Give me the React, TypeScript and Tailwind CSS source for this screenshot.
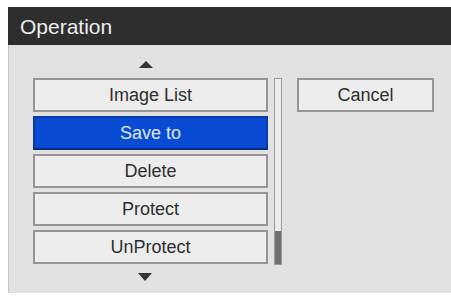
import React from "react";

const items = ["Image List", "Save to", "Delete", "Protect", "UnProtect"];
const selected = "Save to";

export default function App() {
  return (
    <div
      className="w-[451px] h-[296px] bg-white pt-[7px] pl-[8px] overflow-hidden"
      style={{ fontFamily: '"Liberation Sans", Arial, sans-serif' }}
    >
      <div className="flex flex-col h-[286px]">
        {/* Title bar */}
        <div className="h-[38px] bg-[#2e2e2e] flex items-center pl-[12px]">
          <span className="text-[21px] text-[#ececec] leading-none">Operation</span>
        </div>

        {/* Body */}
        <div className="flex-1 bg-[#e1e1e1] border-l border-[#c4c4c4] flex pl-[24px]">
          <div className="flex flex-col w-[235px]">
            <div className="h-[33px] flex items-end justify-center pb-[10px] pr-[10px]">
              <div className="w-0 h-0 border-l-[7px] border-r-[7px] border-b-[7px] border-l-transparent border-r-transparent border-b-[#333]" />
            </div>
            <div className="flex flex-col gap-[4px]">
              {items.map((item) =>
                item === selected ? (
                  <div
                    key={item}
                    className="h-[34px] bg-[#0a4bd4] border-2 border-[#0a3aa8] border-b-[#062a80] flex items-center justify-center text-[18px] text-[#dfe8ff]"
                  >
                    {item}
                  </div>
                ) : (
                  <div
                    key={item}
                    className="h-[34px] bg-[#ececec] border-2 border-[#959595] flex items-center justify-center text-[18px] text-[#2e2e2e]"
                  >
                    {item}
                  </div>
                )
              )}
            </div>
            <div className="h-[17px] flex items-end justify-center pr-[12px]">
              <div className="w-0 h-0 border-l-[7px] border-r-[7px] border-t-[8px] border-l-transparent border-r-transparent border-t-[#333]" />
            </div>
          </div>

          {/* Scrollbar */}
          <div className="ml-[6px] mt-[33px] w-[8px] h-[187px] border border-[#9a9a9a] bg-[#ebebeb] flex flex-col justify-end">
            <div className="h-[33px] bg-[#707070]" />
          </div>

          {/* Cancel */}
          <div className="ml-[15px] mt-[33px]">
            <div className="w-[137px] h-[34px] bg-[#ececec] border-2 border-[#959595] flex items-center justify-center text-[18px] text-[#2e2e2e]">
              Cancel
            </div>
          </div>
        </div>
      </div>
    </div>
  );
}
